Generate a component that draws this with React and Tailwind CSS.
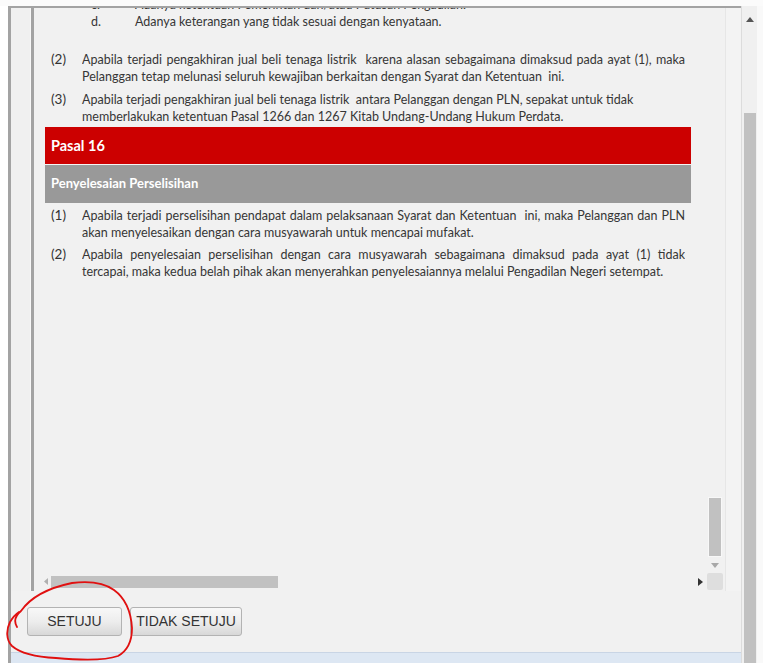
import React from "react";

const F = { fontFamily: "Lato, 'Open Sans', sans-serif" };

function Line({ children, j }) {
  return (
    <div
      className={
        "h-[17px] leading-[17px] whitespace-nowrap " +
        (j ? "w-[603px] [text-align-last:justify] text-justify whitespace-normal overflow-hidden" : "")
      }
    >
      {children}
    </div>
  );
}

function Item({ n, lines }) {
  return (
    <div className="flex">
      <div className="w-[37px] pl-[6px] text-[13.5px] leading-[17px] text-[#333]">({n})</div>
      <div>
        {lines.map((l, i) => (
          <Line key={i} j={l.j}>
            {l.t}
          </Line>
        ))}
      </div>
    </div>
  );
}

export default function App() {
  return (
    <div className="relative w-[763px] h-[663px] overflow-hidden bg-white" style={F}>
      <div className="h-[6px] bg-[#fbfbfb]" />
      <div className="flex h-[657px]">
        <div className="w-[8px] bg-white" />
        {/* panel */}
        <div className="w-[733px] flex flex-col border-l-[3px] border-t-2 border-[#a3a3a3] bg-[#f1f1f1]">
          <div className="flex h-[583px]">
            {/* gutter */}
            <div className="w-[20px] bg-[#f0f0f0] border-r border-[#f8f8f8]" />
            {/* iframe */}
            <div className="w-[694px] flex flex-col border-l-[3px] border-[#a3a3a3] bg-[#f1f1f1]">
              <div className="flex h-[565px]">
                {/* viewport */}
                <div className="w-[673px] overflow-hidden text-[12.5px] text-[#363636]">
                  <div className="-mt-[12px] pl-[11px]">
                    <div className="flex">
                      <div className="w-[46px]" />
                      <div className="w-[44px] h-[17px] leading-[17px]">c.</div>
                      <Line>Adanya ketentuan Pemerintah dan/atau Putusan Pengadilan.</Line>
                    </div>
                    <div className="flex">
                      <div className="w-[46px]" />
                      <div className="w-[44px] h-[17px] leading-[17px]">d.</div>
                      <Line>Adanya keterangan yang tidak sesuai dengan kenyataan.</Line>
                    </div>
                    <div className="h-[21px]" />
                    <Item
                      n={2}
                      lines={[
                        { t: "Apabila terjadi pengakhiran jual beli tenaga listrik\u00a0 karena alasan sebagaimana dimaksud pada ayat (1), maka", j: true },
                        { t: "Pelanggan tetap melunasi seluruh kewajiban berkaitan dengan Syarat dan Ketentuan\u00a0 ini." },
                      ]}
                    />
                    <div className="h-[6px]" />
                    <Item
                      n={3}
                      lines={[
                        { t: "Apabila terjadi pengakhiran jual beli tenaga listrik\u00a0 antara Pelanggan dengan PLN, sepakat untuk tidak" },
                        { t: "memberlakukan ketentuan Pasal 1266 dan 1267 Kitab Undang-Undang Hukum Perdata." },
                      ]}
                    />
                    <div className="h-[2px]" />
                    <div className="w-[646px]">
                      <div className="h-[37px] bg-[#cc0000] flex items-center pl-[6px] text-white font-bold text-[14.5px]">
                        Pasal 16
                      </div>
                      <div className="h-[1px] bg-[#f4f4f4]" />
                      <div className="h-[38px] bg-[#999999] flex items-center pl-[6px] text-white font-bold text-[13px]">
                        Penyelesaian Perselisihan
                      </div>
                    </div>
                    <div className="h-[4px]" />
                    <Item
                      n={1}
                      lines={[
                        { t: "Apabila terjadi perselisihan pendapat dalam pelaksanaan Syarat dan Ketentuan\u00a0 ini, maka Pelanggan dan PLN", j: true },
                        { t: "akan menyelesaikan dengan cara musyawarah untuk mencapai mufakat." },
                      ]}
                    />
                    <div className="h-[5px]" />
                    <Item
                      n={2}
                      lines={[
                        { t: "Apabila penyelesaian perselisihan dengan cara musyawarah sebagaimana dimaksud pada ayat (1) tidak", j: true },
                        { t: "tercapai, maka kedua belah pihak akan menyerahkan penyelesaiannya melalui Pengadilan Negeri setempat." },
                      ]}
                    />
                  </div>
                </div>
                {/* inner vertical scrollbar */}
                <div className="w-[16px] flex flex-col items-center">
                  <div className="h-[489px]" />
                  <div className="w-[14px] h-[60px] border border-[#f8f8f8] bg-[#c1c1c1]" />
                  <div className="h-[16px] flex items-center justify-center">
                    <svg width="8" height="5" viewBox="0 0 8 5"><path d="M0 0h8L4 5z" fill="#a8a8a8" /></svg>
                  </div>
                </div>
              </div>
              {/* horizontal scrollbar */}
              <div className="flex h-[17px] items-center">
                <div className="w-[17px] flex justify-end pr-[3px]">
                  <svg width="4" height="7" viewBox="0 0 4 7"><path d="M4 0v7L0 3.5z" fill="#b0b0b0" /></svg>
                </div>
                <div className="w-[227px] h-[12px] bg-[#c1c1c1]" />
                <div className="w-[420px]" />
                <svg width="5" height="8" viewBox="0 0 5 8"><path d="M0 0v8l5-4z" fill="#333" /></svg>
                <div className="w-[4px]" />
                <div className="w-[16px] h-[17px] bg-[#dedede] rounded-[2px]" />
              </div>
            </div>
            <div className="w-[16px] border-l border-[#e6e6e6] bg-[#f3f3f3]" />
          </div>
          {/* buttons */}
          <div className="h-[61px] flex items-start pt-[16px] pl-[16px] gap-[8px]" style={{ fontFamily: "'Liberation Sans', Arial, sans-serif" }}>
            <button className="w-[95px] h-[29px] rounded-[3px] border border-[#b3b3b3] bg-gradient-to-b from-[#f8f8f8] via-[#ededed] to-[#d8d8d8] text-[14px] text-[#333]">
              SETUJU
            </button>
            <button className="w-[112px] h-[29px] rounded-[3px] border border-[#b3b3b3] bg-gradient-to-b from-[#f8f8f8] via-[#ededed] to-[#d8d8d8] text-[14px] text-[#333]">
              TIDAK SETUJU
            </button>
          </div>
          <div className="flex-1 bg-[#dde7f3] border-t border-[#c9d5e5]" />
        </div>
        {/* outer scrollbar */}
        <div className="w-[16px] bg-[#f0f0f0] flex flex-col items-center border-l border-[#dcdcdc]">
          <div className="h-[16px] flex items-end justify-center">
            <svg width="8" height="5" viewBox="0 0 8 5"><path d="M0 5h8L4 0z" fill="#555" /></svg>
          </div>
          <div className="h-[91px]" />
          <div className="w-[12px] flex-1 bg-[#c1c1c1]" />
        </div>
        <div className="flex-1 bg-[#f9f9f9]" />
      </div>
      {/* hand drawn circle */}
      <svg className="absolute left-0 top-[575px]" width="140" height="88" viewBox="0 575 140 88" fill="none">
        <path
          d="M17 627 C14 622 15 616 21 611 C30 598 48 588 72 583 C88 581 103 582 114 590 C125 598 131 612 132 628 C132 641 127 651 118 656 C104 661 78 660 56 658 C36 657 20 653 12 646 C6 640 6 630 10 622 C13 617 16 614 19 612"
          stroke="#e01010"
          strokeWidth="1.8"
          strokeLinecap="round"
        />
      </svg>
    </div>
  );
}
